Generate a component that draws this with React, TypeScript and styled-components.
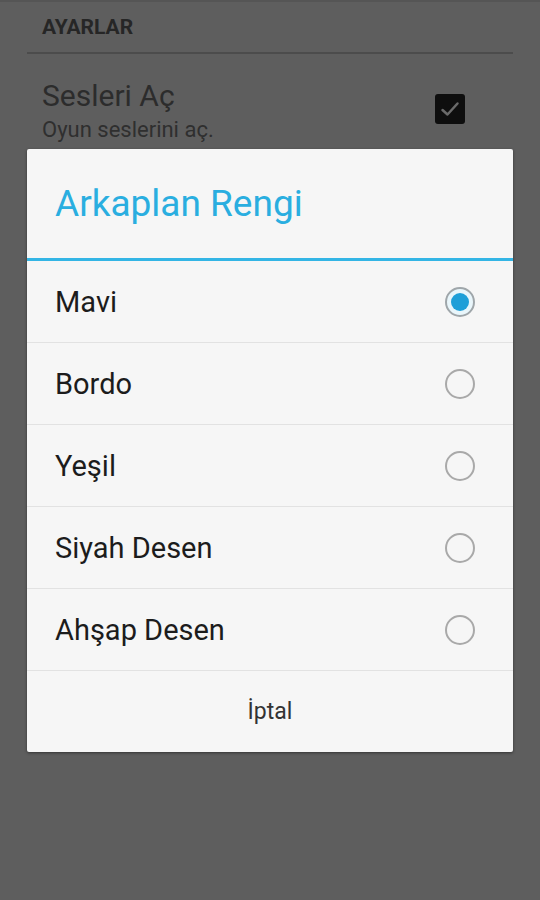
import React, { useState } from "react";
import styled, { createGlobalStyle } from "styled-components";

const Global = createGlobalStyle`
  html, body { margin: 0; padding: 0; }
  body { background: #5e5e5e; font-family: Roboto, "Noto Sans", sans-serif; }
`;

const Screen = styled.div`
  position: relative;
  width: 540px;
  height: 900px;
  background: #5e5e5e;
  border-top: 2px solid #555;
  box-sizing: border-box;
  overflow: hidden;
`;

const Settings = styled.div`
  display: flex;
  flex-direction: column;
  padding: 0 27px;
`;

const Category = styled.div`
  height: 50px;
  display: flex;
  align-items: center;
  padding: 0 15px;
  font-size: 21px;
  font-weight: 700;
  color: #262626;
  border-bottom: 2px solid #4c4c4c;
`;

const PrefRow = styled.div`
  display: flex;
  align-items: center;
  justify-content: space-between;
  padding: 24px 48px 0 15px;
`;

const PrefText = styled.div`
  display: flex;
  flex-direction: column;
`;

const PrefTitle = styled.div`
  font-size: 30px;
  line-height: 36px;
  color: #2c2c2c;
`;

const PrefSummary = styled.div`
  font-size: 22px;
  line-height: 28px;
  color: #2f2f2f;
  margin-top: 2px;
`;

const CheckBox = styled.div`
  width: 30px;
  height: 30px;
  border-radius: 3px;
  background: #0e0e0e;
  display: flex;
  align-items: center;
  justify-content: center;
  margin-bottom: 4px;
`;

const Dialog = styled.div`
  position: absolute;
  left: 27px;
  top: 147px;
  width: 486px;
  background: #f6f6f6;
  box-shadow: 0 1px 3px rgba(0, 0, 0, 0.45);
  border-radius: 2px;
  display: flex;
  flex-direction: column;
`;

const DialogTitle = styled.div`
  height: 109px;
  display: flex;
  align-items: center;
  padding: 0 28px;
  font-size: 37px;
  color: #2aaee0;
  border-bottom: 3px solid #33b5e5;
`;

const Option = styled.div`
  height: 81px;
  display: flex;
  align-items: center;
  justify-content: space-between;
  padding: 0 38px 0 28px;
  border-bottom: 1px solid #e2e2e2;
  font-size: 29px;
  color: #1c1c1c;
  cursor: pointer;
`;

const Radio = styled.div<{ $checked: boolean }>`
  width: 26px;
  height: 26px;
  border-radius: 50%;
  border: 2px solid ${(p) => (p.$checked ? "#9fa6aa" : "#a9a9a9")};
  background: ${(p) => (p.$checked ? "#e9f6fb" : "transparent")};
  display: flex;
  align-items: center;
  justify-content: center;
`;

const Dot = styled.div`
  width: 18px;
  height: 18px;
  border-radius: 50%;
  background: #1e9fd8;
`;

const CancelButton = styled.div`
  height: 81px;
  display: flex;
  align-items: center;
  justify-content: center;
  font-size: 23px;
  color: #333;
`;

const options = ["Mavi", "Bordo", "Yeşil", "Siyah Desen", "Ahşap Desen"];

export default function App() {
  const [sel, setSel] = useState(0);
  return (
    <Screen>
      <Global />
      <Settings>
        <Category>AYARLAR</Category>
        <PrefRow>
          <PrefText>
            <PrefTitle>Sesleri Aç</PrefTitle>
            <PrefSummary>Oyun seslerini aç.</PrefSummary>
          </PrefText>
          <CheckBox>
            <svg width="22" height="22" viewBox="0 0 22 22">
              <path d="M3.5 12 L8.5 16.5 L18.5 5.5" fill="none" stroke="#6a6a6a" strokeWidth="2.5" strokeLinecap="round" strokeLinejoin="round" />
            </svg>
          </CheckBox>
        </PrefRow>
      </Settings>
      <Dialog>
        <DialogTitle>Arkaplan Rengi</DialogTitle>
        {options.map((o, i) => (
          <Option key={o} onClick={() => setSel(i)}>
            <span>{o}</span>
            <Radio $checked={sel === i}>{sel === i && <Dot />}</Radio>
          </Option>
        ))}
        <CancelButton>İptal</CancelButton>
      </Dialog>
    </Screen>
  );
}
